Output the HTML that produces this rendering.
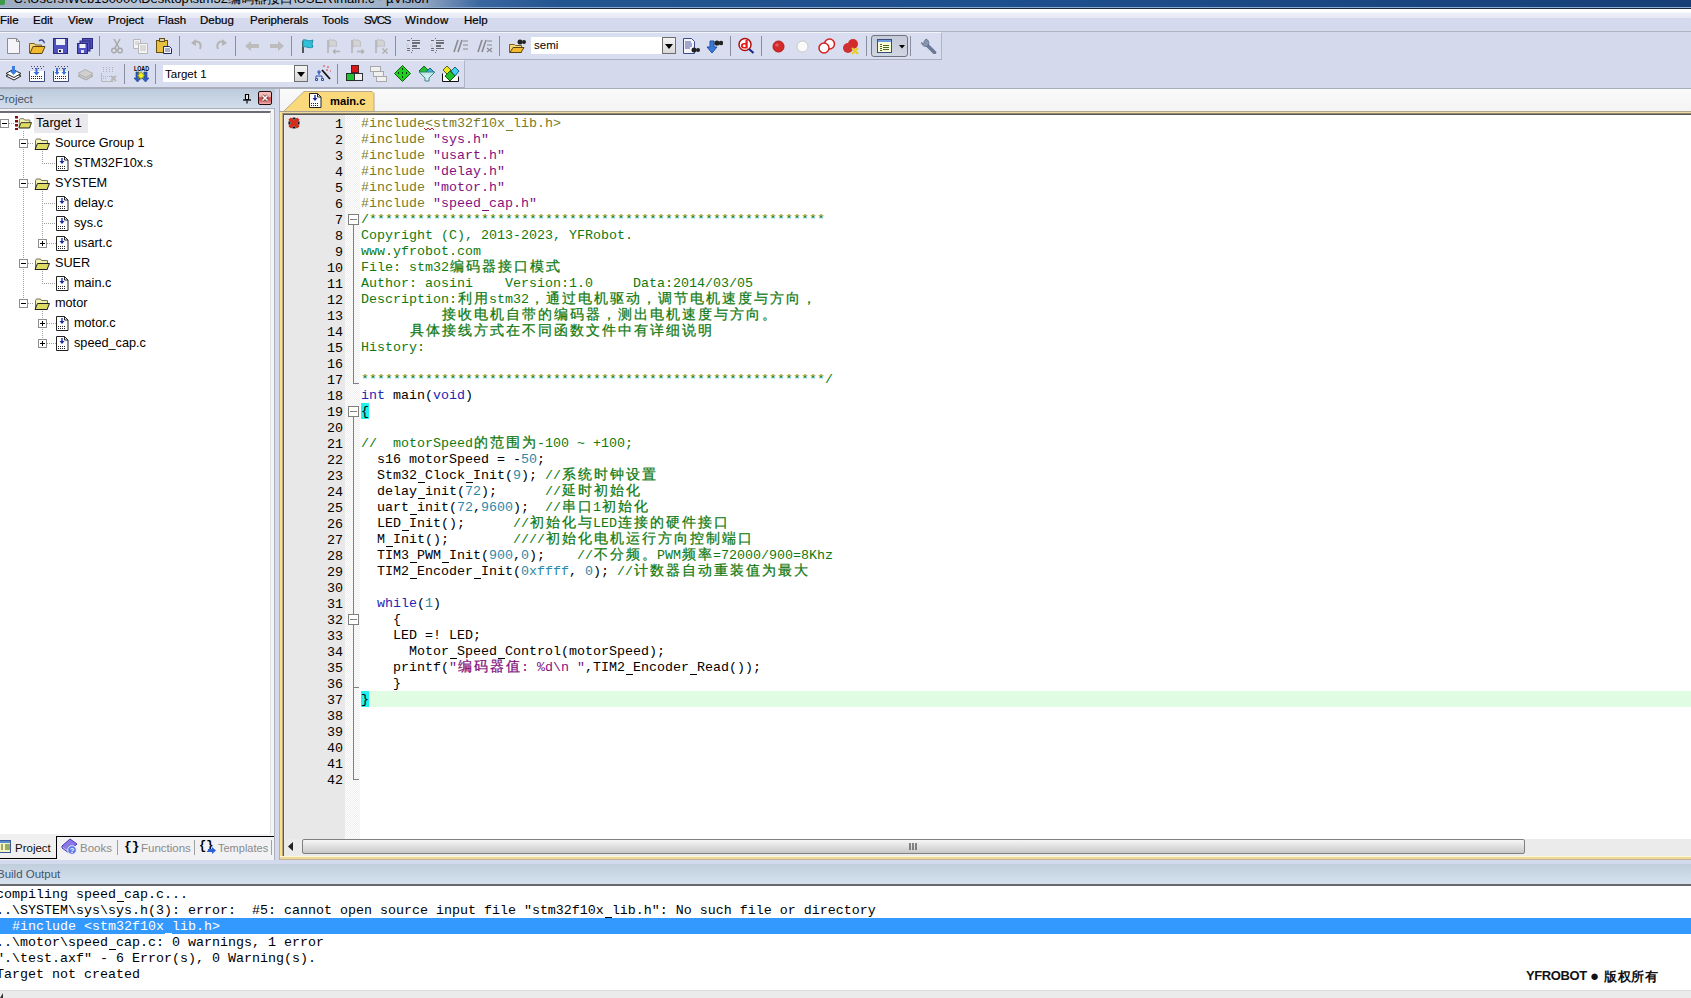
<!DOCTYPE html>
<html><head><meta charset="utf-8"><style>
*{margin:0;padding:0;box-sizing:border-box}
html,body{width:1691px;height:998px;overflow:hidden;position:relative;background:#D5DAEE;font-family:"Liberation Sans",sans-serif;font-size:12px;color:#000}
.a{position:absolute}
#title{left:0;top:0;width:1691px;height:9px;background:linear-gradient(90deg,#9AAAC0 0,#B8C4D4 120px,#B4C0D0 300px,#98AAC4 420px,#3A67A0 480px,#22548F 560px,#1E4F8D 1000px,#173F76 1691px);border-bottom:1px solid #1B2A3E;overflow:hidden}
#title span{position:absolute;left:13.5px;top:-10px;font-size:13px;color:#000;white-space:pre}
#menu{left:0;top:9px;width:1691px;height:23px;background:linear-gradient(#FFFFFF 0,#FFFFFF 3px,#EEF0F8 4px,#E7EAF5 8.5px,#D5DAEE 9.5px,#D4D9EE 21px,#D8DDEE 22px);border-bottom:1px solid #AEB4C4}
#menu span{position:absolute;top:5px;font-size:11.5px;color:#000;-webkit-text-stroke:0.2px #000}
#tb{left:0;top:32px;width:1691px;height:57px;background:#D4D9EC;border-bottom:1px solid #A8ADBA}
.tbline{position:absolute;left:0;width:1691px;height:1px;background:#B3B8C8}
.sep{position:absolute;width:1px;height:20px;background:#8A8E9C}
/* left panel */
#lp{left:0;top:108px;width:275px;height:752px;background:#F5F4F7;border-top:1px solid #A9B0BC;border-right:1px solid #A9B0BC}
#split{left:275px;top:89px;width:4px;height:771px;background:linear-gradient(90deg,#D0DCE8 0 1px,#D5D9EC 1px)}
#lphead{left:0;top:89px;width:275px;height:19px;background:linear-gradient(#BCCBDC,#D3DDEB)}
#lphead span{position:absolute;left:-3px;top:3.5px;font-size:11.5px;color:#44546A}
#tree{left:0;top:111px;width:271px;height:723px;background:#fff;border-top:2px solid #6A6D73;border-right:1px solid #E0E0E0}
.ti{position:absolute;font-size:12.7px;color:#000;white-space:pre}
#tabs{left:0;top:834px;width:274px;height:26px;background:#F2F2F4}
/* editor */
#ed{left:279px;top:89px;width:1412px;height:771px;background:#F7F7F7}
#gut{left:285px;top:115px;width:60px;height:724px;background:#E8E8E8}
#fold{left:345px;top:115px;width:15px;height:724px;background-color:#fff;background-image:repeating-conic-gradient(#EEEEEE 0 25%,#FFFFFF 0 50%);background-size:2px 2px}
#code{left:360px;top:115px;width:1331px;height:724px;background:#fff}
.ln{position:absolute;left:301px;width:42px;text-align:right;font-family:"Liberation Mono",monospace;font-size:13.333px;line-height:16px;height:16px;color:#000}
.cl{position:absolute;left:361px;font-family:"Liberation Mono",monospace;font-size:13.333px;line-height:16px;height:16px;white-space:pre;color:#000}
.cl i{font-style:normal;display:inline-block;width:16px;text-align:center;font-size:14px;line-height:16px;vertical-align:top;position:relative;top:-1.5px;-webkit-text-stroke:0.25px currentColor}
.pp{color:#7A7A28}.st{color:#82107E}.cm{color:#107A10}.kw{color:#2424B4}.nm{color:#2A88A8}
.br{}
/* output */
#ohead{left:0;top:860px;width:1691px;height:26px;background:linear-gradient(#D4DAEE 0,#D4DAEE 3.5px,#C1CFDD 4.5px,#D3E0EE 22px,#D8E0EC 23px,#D8E0EC 24px);border-bottom:2px solid #68696E}
#ohead span{position:absolute;left:-3px;top:8px;font-size:11.5px;color:#44546A}
#out{left:0;top:886px;width:1691px;height:104px;background:#fff}
.ol{position:absolute;left:-4px;height:16px;line-height:16px;font-family:"Liberation Mono",monospace;font-size:13.333px;white-space:pre;color:#000}
.ol.sel{color:#fff}
#status{left:0;top:990px;width:1691px;height:8px;background:#EBEBEB;border-top:1px solid #DCDCDC}
#wm{left:1526px;top:968px;font-size:13px;font-weight:bold;color:#111;white-space:pre}
.combo{background:#fff;border:0}
.combo span{position:absolute;font-size:11.5px;color:#000;white-space:pre}
.combo .dd{position:absolute;right:0;top:0;width:14px;height:17px;border:1px solid #6E6E6E;background:linear-gradient(#F4F4F4,#D8D8D8)}
.combo .dd:after{content:"";position:absolute;left:2px;top:6px;border-left:4px solid transparent;border-right:4px solid transparent;border-top:5px solid #000}
.tab{font-size:11.5px;color:#8A8A8A;white-space:pre}
#tabstrip{left:280px;top:89px;width:1411px;height:22px;background:linear-gradient(#FAFAFA,#F4F4F4)}
#frame{left:279px;top:111px;width:1412px;height:748px;background:#FBE18C;border-left:1px solid #BFB08A;border-top:1px solid #A8A090}
#frame2{left:282px;top:113px;width:1409px;height:744px;border-left:1px solid #B8A878;border-top:1px solid #8E8666}
#frame3{left:283px;top:114px;width:1408px;height:742px;border-left:1px solid #56595E;border-top:1px solid #55585C;background:#F1EFF5}
#hscroll{left:284px;top:839px;width:1407px;height:17px;background:#EBEBEB}
#thumb{left:302px;top:839px;width:1223px;height:15px;border:1px solid #808080;border-radius:2px;background:linear-gradient(#F6F6F6,#E0E0E0 50%,#C8C8C8)}
.dh{height:1px;background:repeating-linear-gradient(90deg,#A0A0A0 0 1px,transparent 1px 2px)}
.dv{width:1px;background:repeating-linear-gradient(#A0A0A0 0 1px,transparent 1px 2px)}

.us{display:inline-block;width:8px;height:16px;vertical-align:top;background:linear-gradient(transparent 14px,currentColor 14px,currentColor 15px,transparent 15px);background-size:7px 16px;background-repeat:no-repeat;background-position:1px 0}

</style></head><body>
<svg width="0" height="0" style="position:absolute">
<defs>
<symbol id="bm" viewBox="0 0 9 9"><rect x="0.5" y="0.5" width="8" height="8" fill="#fff" stroke="#8E8E8E"/><path d="M2 4.5h5" stroke="#000"/></symbol>
<symbol id="bp" viewBox="0 0 9 9"><rect x="0.5" y="0.5" width="8" height="8" fill="#fff" stroke="#8E8E8E"/><path d="M2 4.5h5M4.5 2v5" stroke="#000"/></symbol>
<symbol id="fd" viewBox="0 0 16 13"><path d="M1.5 2.5l1-1.5h4l1 1.5h6v9h-12z" fill="#F0F0B0" stroke="#6E6E50"/><path d="M1 11.5l2.5-6h12l-2.5 6z" fill="#DCDC60" stroke="#202020"/></symbol>
<symbol id="fl" viewBox="0 0 13 15"><path d="M0.5 0.5h8l3.5 3.5v10.5h-11.5z" fill="#fff" stroke="#222"/><path d="M8.5 0.5v3.5h3.5" fill="none" stroke="#222"/><path d="M6 2v5" stroke="#1A2A9A" stroke-width="1.4"/><path d="M3.5 5h5l-2.5 3z" fill="#1A2A9A"/><g fill="#222"><rect x="2" y="10" width="1" height="1"/><rect x="4" y="10" width="1" height="1"/><rect x="6" y="10" width="1" height="1"/><rect x="8" y="10" width="1" height="1"/><rect x="2" y="12" width="1" height="1"/><rect x="4" y="12" width="1" height="1"/><rect x="6" y="12" width="1" height="1"/><rect x="8" y="12" width="1" height="1"/></g></symbol>
<symbol id="gf" viewBox="0 0 16 16"><path d="M3 15V2" stroke="#B4B4B4" stroke-width="1.6"/><path d="M4 2c2-1 3 1 5 0l2 1 1 5c-2 1-3-1-5 0l-3 1z" fill="#D4D4D4" stroke="#B8B8B8" stroke-width=".8"/></symbol><symbol id="ga" viewBox="0 0 16 16"><use href="#gf"/><path d="M8 13.5h7M8 13.5l2.5-2M8 13.5l2.5 2" stroke="#B0B0B0" stroke-width="1.4" fill="none"/></symbol><symbol id="gb" viewBox="0 0 16 16"><use href="#gf"/><path d="M8 13.5h7M15 13.5l-2.5-2M15 13.5l-2.5 2" stroke="#B0B0B0" stroke-width="1.4" fill="none"/></symbol><symbol id="gc" viewBox="0 0 16 16"><use href="#gf"/><path d="M9.5 10.5l5 5M14.5 10.5l-5 5" stroke="#B0B0B0" stroke-width="1.4" fill="none"/></symbol>
</defs></svg>
<div class="a" id="title"><div class="a" style="left:0;top:7px;width:1691px;height:1px;background:linear-gradient(90deg,rgba(180,200,225,.5) 0,rgba(142,176,216,.9) 500px,#8EB0D8 1691px)"></div><div class="a" style="left:0;top:0;width:5px;height:5px;background:#3E9A4A;border-radius:0 0 2px 0"></div><span>C:\Users\Web150000\Desktop\stm32编码器接口\USER\main.c - µVision</span></div>
<div class="a" id="menu">
<span style="left:0px">File</span><span style="left:33px">Edit</span><span style="left:68px">View</span><span style="left:108px">Project</span><span style="left:158px">Flash</span><span style="left:200px">Debug</span><span style="left:250px">Peripherals</span><span style="left:322px">Tools</span><span style="left:364px;letter-spacing:-1.3px">SVCS</span><span style="left:405px;letter-spacing:0.5px">Window</span><span style="left:464px">Help</span>
</div>
<div class="a" id="tb">
<div class="a" style="left:0;top:0;width:942px;height:28px;background:#D8DDEF;border-top:1px solid #F2F4FB;border-bottom:1px solid #A9AEBD;border-right:1px solid #B0B5C4"></div>
<div class="a" style="left:0;top:28px;width:465px;height:28px;background:#D8DDEF;border-top:1px solid #F2F4FB;border-bottom:1px solid #A9AEBD;border-right:1px solid #B0B5C4"></div>
</div>
<!-- toolbar row 1 icons -->
<svg class="a" style="left:6px;top:38px" width="16" height="16"><path d="M1.5 0.5h9l3 3v12h-12z" fill="#F4F4FA" stroke="#8C8C8C"/><path d="M10.5 0.5v3h3" fill="none" stroke="#8C8C8C"/></svg>
<svg class="a" style="left:29px;top:38px" width="17" height="16"><path d="M10 3c2-2 4-1 5 1" fill="none" stroke="#3A4C9A" stroke-width="1.5"/><path d="M14 3l2 1-1 2z" fill="#3A4C9A"/><path d="M0.5 5.5h5l1 1.5h6v8h-12z" fill="#F6D77A" stroke="#7A6020"/><path d="M1 15.5l3-7h12l-3 7z" fill="#F2B830" stroke="#5A4410"/></svg>
<svg class="a" style="left:53px;top:38px" width="16" height="16"><rect x="0.5" y="0.5" width="14" height="15" fill="#5050C0" stroke="#2A2A80"/><rect x="3" y="1" width="9" height="6" fill="#EEF0FA"/><rect x="5" y="11" width="5" height="4" fill="#E8E8F0"/><rect x="6" y="12" width="2" height="2" fill="#202050"/></svg>
<svg class="a" style="left:77px;top:38px" width="16" height="16"><rect x="5.5" y="0.5" width="10" height="10" fill="#5050B8" stroke="#2A2A80"/><rect x="3" y="3" width="10" height="10" fill="#5050B8" stroke="#2A2A80"/><rect x="0.5" y="5.5" width="10" height="10" fill="#5050C0" stroke="#2A2A80"/><rect x="2.5" y="6" width="6" height="4" fill="#EEF0FA"/><rect x="4" y="12" width="3" height="3" fill="#E0E0F0"/></svg>
<div class="sep" style="left:99px;top:36px"></div>
<svg class="a" style="left:111px;top:38px" width="12" height="16"><path d="M3 1l5 9M9 1l-5 9" stroke="#A8A8A8" stroke-width="1.5"/><circle cx="3" cy="12.5" r="2.3" fill="none" stroke="#A8A8A8" stroke-width="1.4"/><circle cx="9" cy="12.5" r="2.3" fill="none" stroke="#A8A8A8" stroke-width="1.4"/></svg>
<svg class="a" style="left:133px;top:38px" width="16" height="16"><path d="M0.5 1.5h7v9h-7z" fill="#F4F4F4" stroke="#B8B8B8"/><path d="M5.5 5.5h9v10h-9z" fill="#F4F4F4" stroke="#B8B8B8"/><path d="M7 8h6M7 10h6M7 12h6M2 4h4M2 6h4" stroke="#C0C0C0"/></svg>
<svg class="a" style="left:156px;top:38px" width="17" height="16"><rect x="0.5" y="2.5" width="11" height="12" fill="#E8C040" stroke="#6A5010"/><rect x="3.5" y="0.5" width="5" height="3" fill="#D8D0B0" stroke="#6A5010"/><path d="M7.5 8.5h6l2 2v5h-8z" fill="#F4F4FA" stroke="#1A2A5A"/><path d="M9 11h5M9 13h5" stroke="#5A6A9A"/></svg>
<div class="sep" style="left:179px;top:36px"></div>
<svg class="a" style="left:190px;top:38px" width="14" height="16"><path d="M4 4c5-2 8 2 6 7" fill="none" stroke="#B4B4B4" stroke-width="2"/><path d="M1 5l5-4v7z" fill="#B4B4B4"/></svg>
<svg class="a" style="left:214px;top:38px" width="14" height="16"><path d="M10 4c-5-2-8 2-6 7" fill="none" stroke="#B4B4B4" stroke-width="2"/><path d="M13 5l-5-4v7z" fill="#B4B4B4"/></svg>
<div class="sep" style="left:235px;top:36px"></div>
<svg class="a" style="left:245px;top:40px" width="15" height="12"><path d="M0 6l6-5v3h8v4h-8v3z" fill="#BCBCBC"/></svg>
<svg class="a" style="left:269px;top:40px" width="15" height="12"><path d="M15 6l-6-5v3h-8v4h8v3z" fill="#BCBCBC"/></svg>
<div class="sep" style="left:291px;top:36px"></div>
<svg class="a" style="left:300px;top:38px" width="16" height="16"><path d="M3 15V3" stroke="#555" stroke-width="2"/><path d="M3 2c3-1 5 2 10 0l-1 4 1 3c-4 2-6-1-10 0z" fill="#30C0D8" stroke="#2090A8"/></svg>
<svg class="a" style="left:325px;top:38px" width="16" height="16"><use href="#ga"/></svg>
<svg class="a" style="left:349px;top:38px" width="16" height="16"><use href="#gb"/></svg>
<svg class="a" style="left:373px;top:38px" width="16" height="16"><use href="#gc"/></svg>
<div class="sep" style="left:395px;top:36px"></div>
<svg class="a" style="left:405px;top:37px" width="16" height="18"><g fill="#6E6E76"><rect x="2" y="3" width="3" height="1"/><rect x="7" y="3" width="8" height="1"/><rect x="7" y="5" width="8" height="2"/><rect x="7" y="8" width="5" height="2"/><rect x="2" y="11" width="3" height="1"/><rect x="7" y="11" width="8" height="1"/><rect x="2" y="13" width="3" height="1"/><rect x="7" y="13" width="1" height="1"/><rect x="6" y="1" width="1" height="1"/><rect x="6" y="15" width="1" height="1"/></g><path d="M1 7l3 1.5-3 1.5" fill="none" stroke="#C8C8D0"/></svg>
<svg class="a" style="left:429px;top:37px" width="16" height="18"><g fill="#6E6E76"><rect x="2" y="3" width="3" height="1"/><rect x="7" y="3" width="8" height="1"/><rect x="7" y="5" width="8" height="2"/><rect x="7" y="8" width="5" height="2"/><rect x="2" y="11" width="3" height="1"/><rect x="7" y="11" width="8" height="1"/><rect x="2" y="13" width="3" height="1"/><rect x="7" y="13" width="1" height="1"/><rect x="6" y="1" width="1" height="1"/><rect x="6" y="15" width="1" height="1"/></g><path d="M4 7l-3 1.5 3 1.5" fill="none" stroke="#C8C8D0"/></svg>
<svg class="a" style="left:453px;top:38px" width="16" height="16"><path d="M1 14l4-12M5 14l4-12" stroke="#8A8A90" stroke-width="1.6"/><path d="M10 3h5M10 7h5M10 11h5" stroke="#8A8A90" stroke-width="1.2"/></svg>
<svg class="a" style="left:477px;top:38px" width="16" height="16"><path d="M1 14l4-12M5 14l4-12" stroke="#8A8A90" stroke-width="1.6"/><path d="M10 3h5M10 7h5M10 14l5-4M10 10l5 4" stroke="#8A8A90" stroke-width="1.2"/></svg>
<div class="sep" style="left:499px;top:36px"></div>
<svg class="a" style="left:509px;top:38px" width="17" height="16"><path d="M0.5 6.5h5l1 1h6v7h-12z" fill="#F6D77A" stroke="#7A6020"/><path d="M1 14.5l3-5h11l-3 5z" fill="#F2B830" stroke="#5A4410"/><circle cx="11" cy="4" r="2.5" fill="#222"/><circle cx="15" cy="4" r="2" fill="#222"/></svg>
<div class="a combo" style="left:531px;top:37px;width:145px;height:17px"><span style="left:3px;top:2px">semi</span><div class="dd"></div></div>
<svg class="a" style="left:683px;top:38px" width="17" height="16"><path d="M0.5 0.5h8l3 3v12h-11z" fill="#F4F4FA" stroke="#3A4A8A"/><path d="M2 4h6M2 6h7M2 8h7M2 10h5" stroke="#4A5AA0"/><circle cx="11" cy="12" r="2.5" fill="#222"/><circle cx="15" cy="12" r="2" fill="#222"/></svg>
<svg class="a" style="left:706px;top:38px" width="17" height="16"><path d="M4 3v6H1l5 6 5-6H8V3z" fill="#3A7AD8" stroke="#2050A0"/><circle cx="11" cy="5" r="2.6" fill="#222"/><circle cx="15" cy="5" r="2.2" fill="#222"/></svg>
<div class="sep" style="left:730px;top:36px"></div>
<svg class="a" style="left:738px;top:37px" width="17" height="17"><circle cx="7" cy="7.5" r="6" fill="#fff" stroke="#B01010" stroke-width="1.5"/><path d="M7.5 3h2.2v8.5h-4a2.7 2.7 0 0 1 0-5.4h1.8zM7.5 7.6h-1.4a1.2 1.2 0 0 0 0 2.4h1.4z" fill="#E81818" fill-rule="evenodd"/><path d="M11 12l4.5 4" stroke="#1A2A8A" stroke-width="2.2"/></svg>
<div class="sep" style="left:761px;top:36px"></div>
<svg class="a" style="left:772px;top:40px" width="13" height="13"><circle cx="6.5" cy="6.5" r="5.5" fill="#D42A2A" stroke="#B01818"/><circle cx="5" cy="5" r="1.8" fill="#F08080" opacity=".6"/></svg>
<svg class="a" style="left:796px;top:40px" width="13" height="13"><circle cx="6.5" cy="6.5" r="5.5" fill="#FAFAFA" stroke="#C8C8C8"/></svg>
<svg class="a" style="left:817px;top:38px" width="20" height="16"><circle cx="12.5" cy="6" r="5" fill="#fff" stroke="#D42020" stroke-width="1.5"/><circle cx="7" cy="10" r="5" fill="#fff" stroke="#D42020" stroke-width="1.5"/></svg>
<svg class="a" style="left:842px;top:38px" width="19" height="17"><circle cx="11" cy="6" r="5" fill="#D42A2A"/><circle cx="6" cy="10" r="5" fill="#D03030"/><path d="M10 10l6 6M16 10l-6 6" stroke="#E8D020" stroke-width="2"/></svg>
<div class="sep" style="left:866px;top:36px"></div>
<div class="a" style="left:871px;top:35px;width:37px;height:22px;border:1px solid #70747E;border-radius:3px;background:linear-gradient(#C4CAD8,#D0D5E2)"></div>
<svg class="a" style="left:877px;top:38px" width="30" height="16"><rect x="0.5" y="1.5" width="14" height="13" fill="#FAFAD8" stroke="#3A4A7A"/><rect x="1" y="2" width="13" height="2" fill="#6A9AE0"/><path d="M3 6h2v1H3zM3 8h2v1H3zM3 10h2v1H3zM3 12h2v1H3zM6 7h6v1H6zM6 9h6v1H6zM6 11h6v1H6z" fill="#4A6A20"/><path d="M22 7h6l-3 3.5z" fill="#000"/></svg>
<div class="sep" style="left:910px;top:36px"></div>
<svg class="a" style="left:920px;top:38px" width="17" height="16"><path d="M6.5 6.5l8 8" stroke="#6A7898" stroke-width="3.6" stroke-linecap="round"/><path d="M1.5 4.5a4.2 4.2 0 0 0 6 3.5l0.5-0.5a4.2 4.2 0 0 0-2-6.5l-2 2.5 0.5 1.5-1.5 0.5z" fill="#8A96B0" stroke="#5A6888" stroke-width=".8"/></svg>
<!-- toolbar row 2 icons -->
<svg class="a" style="left:5px;top:66px" width="17" height="16"><path d="M1 10l7-4 8 4-7 4z" fill="#fff" stroke="#222"/><path d="M1 7.5l7-4 8 4-7 4z" fill="#fff" stroke="#222"/><path d="M7 0v5H4.5l4 4 4-4H10V0z" fill="#3A80E0"/></svg>
<svg class="a" style="left:29px;top:66px" width="16" height="16"><path d="M2 0h1v1h-1zM5 0h1v1h-1zM8 0h1v1h-1zM11 0h1v1h-1zM14 0h1v1h-1zM3 2h1v1h-1zM6 2h1v1h-1zM9 2h1v1h-1zM12 2h1v1h-1z" fill="#4A4A60"/><path d="M0.5 5v10.5h15V5" fill="#fff" stroke="#3A4A7A"/><path d="M2 10h1v1h-1zM4 10h1v1h-1zM6 10h1v1h-1zM8 10h1v1h-1zM10 10h1v1h-1zM12 10h1v1h-1zM2 12h1v1h-1zM4 12h1v1h-1zM6 12h1v1h-1zM8 12h1v1h-1zM10 12h1v1h-1zM12 12h1v1h-1z" fill="#222"/><path d="M6.5 2v4H4.5l3 3.5 3-3.5H8.5V2z" fill="#3A70D8"/></svg>
<svg class="a" style="left:53px;top:66px" width="16" height="16"><path d="M2 0h1v1h-1zM5 0h1v1h-1zM8 0h1v1h-1zM11 0h1v1h-1zM14 0h1v1h-1zM3 2h1v1h-1zM6 2h1v1h-1zM9 2h1v1h-1zM12 2h1v1h-1z" fill="#4A4A60"/><path d="M0.5 5v10.5h15V5" fill="#fff" stroke="#3A4A7A"/><path d="M2 10h1v1h-1zM4 10h1v1h-1zM6 10h1v1h-1zM8 10h1v1h-1zM10 10h1v1h-1zM12 10h1v1h-1zM2 12h1v1h-1zM4 12h1v1h-1zM6 12h1v1h-1zM8 12h1v1h-1zM10 12h1v1h-1zM12 12h1v1h-1z" fill="#222"/><path d="M3 2v4H1.5l2.5 3 2.5-3H5V2zM10 2v4H8.5l2.5 3 2.5-3H12V2z" fill="#3A70D8"/></svg>
<svg class="a" style="left:77px;top:66px" width="16" height="16"><path d="M1 10l7-4 8 4-7 4z" fill="#C8C8C8" stroke="#A8A8A8"/><path d="M1 7.5l7-4 8 4-7 4z" fill="#D0D0D0" stroke="#B0B0B0"/></svg>
<svg class="a" style="left:101px;top:66px" width="16" height="16"><path d="M2 1h1v1h-1zM5 1h1v1h-1zM8 1h1v1h-1zM11 1h1v1h-1zM2 3h1v1h-1zM5 3h1v1h-1zM8 3h1v1h-1zM11 3h1v1h-1zM2 5h1v1h-1zM5 5h1v1h-1zM8 5h1v1h-1zM11 5h1v1h-1z" fill="#B0B0B0"/><path d="M0.5 7v8.5h12" fill="none" stroke="#B8B8B8"/><path d="M2 10h1v1h-1zM4 10h1v1h-1zM6 10h1v1h-1zM8 10h1v1h-1zM10 10h1v1h-1zM12 10h1v1h-1zM2 12h1v1h-1zM4 12h1v1h-1z" fill="#B8B8B8"/><path d="M10 10l5 5M15 10l-5 5" stroke="#B8B8B8" stroke-width="1.8"/></svg>
<div class="sep" style="left:124px;top:64px"></div>
<svg class="a" style="left:132px;top:64px" width="18" height="19"><text x="2" y="7" font-size="7" font-weight="bold" textLength="15" lengthAdjust="spacingAndGlyphs" font-family="Liberation Sans" fill="#000">LOAD</text><path d="M4 8h3v6h2l-3.5 4-3.5-4h2zM12 8h3v6h2l-3.5 4-3.5-4h2z" fill="#2A5CC8" stroke="#1A3A80" stroke-width=".6"/><path d="M9 7.5l1 2 2-1-1 2 2 1-2 1 1 2-2-1-1 2-1-2-2 1 1-2-2-1 2-1-1-2 2 1z" fill="#EEF020" stroke="#6A7010" stroke-width=".5"/></svg>
<div class="sep" style="left:155px;top:64px"></div>
<div class="a combo" style="left:163px;top:65px;width:145px;height:17px"><span style="left:2px;top:3px">Target 1</span><div class="dd"></div></div>
<svg class="a" style="left:314px;top:65px" width="18" height="17"><path d="M8 5l8 9" stroke="#111" stroke-width="1.8"/><path d="M9 1h2M13 2h2M12 5h2M16 6h1" stroke="#D04040"/><path d="M5 7v3M2 13v-2h6v2M1.5 13.5h2v2h-2zM7.5 13.5h2v2h-2zM4 6h2v2H4z" fill="none" stroke="#2A50B0"/></svg>
<div class="sep" style="left:337px;top:64px"></div>
<svg class="a" style="left:346px;top:65px" width="18" height="17"><rect x="5.5" y="0.5" width="7" height="7" fill="#D81818" stroke="#502020"/><rect x="0.5" y="8.5" width="8" height="7" fill="#20C030" stroke="#203020"/><rect x="8.5" y="8.5" width="8" height="7" fill="#F0F0F0" stroke="#303030"/></svg>
<svg class="a" style="left:370px;top:66px" width="17" height="16"><rect x="0.5" y="0.5" width="10" height="5" fill="#F0F0F0" stroke="#A8A8A8"/><rect x="3.5" y="5.5" width="10" height="5" fill="#F0F0F0" stroke="#A8A8A8"/><rect x="6.5" y="10.5" width="10" height="5" fill="#F0F0F0" stroke="#A8A8A8"/></svg>
<svg class="a" style="left:394px;top:65px" width="17" height="17"><path d="M8.5 0.5l8 8-8 8-8-8z" fill="#20D020" stroke="#106010"/><path d="M8 4h1M4 8h1M12 8h1M8 12h1M8 8h1" stroke="#000" stroke-width="1.5"/></svg>
<svg class="a" style="left:418px;top:65px" width="18" height="17"><path d="M6 1l5 5-5 4-5-4z" fill="#20C030" stroke="#206020"/><path d="M12 3l4 4-4 3-4-3z" fill="#40B0E0" stroke="#206080"/><path d="M1 7h16l-6 6v3h-4v-3z" fill="#D0F0F0" stroke="#308080" opacity=".9"/></svg>
<svg class="a" style="left:442px;top:65px" width="18" height="17"><path d="M0.5 8.5v8h16v-5" fill="#fff" stroke="#111"/><path d="M5 1l4 4-4 4-4-4z" fill="#E8E820" stroke="#606020"/><path d="M13 2l4 4-4 5-4-5z" fill="#40D0F0" stroke="#206080"/><path d="M8 6l5 5-5 5-5-5z" fill="#20C030" stroke="#106010"/></svg>
<!-- left panel -->
<div class="a" id="lp"></div><div class="a" id="split"></div>
<div class="a" id="lphead"><span>Project</span></div>
<svg class="a" style="left:242px;top:93px" width="10" height="11"><path d="M3.5 1.5h3v5h-3z" fill="#fff" stroke="#000" stroke-width="1.2"/><path d="M1 7h8" stroke="#000" stroke-width="1.3"/><path d="M5 7.5v3" stroke="#000" stroke-width="1.2"/></svg>
<div class="a" style="left:258px;top:91px;width:14px;height:14px;border:1px solid #2A0A0A;border-radius:2px;background:linear-gradient(#F6C4C4 0,#EFA8A8 40%,#C84848 48%,#D66A6A 75%,#F2B4B4 100%)"></div>
<svg class="a" style="left:261px;top:94px" width="8" height="8"><path d="M1.5 1.5l5 5M6.5 1.5l-5 5" stroke="#5A2020" stroke-width="2.8"/><path d="M1.5 1.5l5 5M6.5 1.5l-5 5" stroke="#fff" stroke-width="1.7"/></svg>
<div class="a" id="tree"></div>
<div class="a" style="left:34px;top:114px;width:54px;height:19px;background:#E9E9EE"></div>
<div class="a dh" style="left:9px;top:123px;width:6px"></div>
<svg class="a" style="left:15px;top:116px" width="17" height="14"><path d="M1.5 0v14" stroke="#8A0A0A" stroke-width="3" stroke-dasharray="2.5 1.5"/><use href="#fd" x="3" y="1" width="14" height="13"/></svg>
<span class="a ti" style="left:36px;top:116px">Target 1</span>
<div class="a dh" style="left:28px;top:143px;width:6px"></div>
<svg class="a" style="left:34px;top:138px" width="16" height="13"><use href="#fd"/></svg>
<span class="a ti" style="left:55px;top:136px">Source Group 1</span>
<div class="a dh" style="left:42px;top:163px;width:14px"></div>
<svg class="a" style="left:56px;top:156px" width="13" height="15"><use href="#fl"/></svg>
<span class="a ti" style="left:74px;top:156px">STM32F10x.s</span>
<div class="a dh" style="left:28px;top:183px;width:6px"></div>
<svg class="a" style="left:34px;top:178px" width="16" height="13"><use href="#fd"/></svg>
<span class="a ti" style="left:55px;top:176px">SYSTEM</span>
<div class="a dh" style="left:42px;top:203px;width:14px"></div>
<svg class="a" style="left:56px;top:196px" width="13" height="15"><use href="#fl"/></svg>
<span class="a ti" style="left:74px;top:196px">delay.c</span>
<div class="a dh" style="left:42px;top:223px;width:14px"></div>
<svg class="a" style="left:56px;top:216px" width="13" height="15"><use href="#fl"/></svg>
<span class="a ti" style="left:74px;top:216px">sys.c</span>
<div class="a dh" style="left:47px;top:243px;width:9px"></div>
<svg class="a" style="left:56px;top:236px" width="13" height="15"><use href="#fl"/></svg>
<span class="a ti" style="left:74px;top:236px">usart.c</span>
<div class="a dh" style="left:28px;top:263px;width:6px"></div>
<svg class="a" style="left:34px;top:258px" width="16" height="13"><use href="#fd"/></svg>
<span class="a ti" style="left:55px;top:256px">SUER</span>
<div class="a dh" style="left:42px;top:283px;width:14px"></div>
<svg class="a" style="left:56px;top:276px" width="13" height="15"><use href="#fl"/></svg>
<span class="a ti" style="left:74px;top:276px">main.c</span>
<div class="a dh" style="left:28px;top:303px;width:6px"></div>
<svg class="a" style="left:34px;top:298px" width="16" height="13"><use href="#fd"/></svg>
<span class="a ti" style="left:55px;top:296px">motor</span>
<div class="a dh" style="left:47px;top:323px;width:9px"></div>
<svg class="a" style="left:56px;top:316px" width="13" height="15"><use href="#fl"/></svg>
<span class="a ti" style="left:74px;top:316px">motor.c</span>
<div class="a dh" style="left:47px;top:343px;width:9px"></div>
<svg class="a" style="left:56px;top:336px" width="13" height="15"><use href="#fl"/></svg>
<span class="a ti" style="left:74px;top:336px">speed_cap.c</span>
<div class="a dv" style="left:23px;top:131px;height:172px"></div>
<div class="a dv" style="left:42px;top:151px;height:12px"></div>
<div class="a dv" style="left:42px;top:191px;height:52px"></div>
<div class="a dv" style="left:42px;top:271px;height:12px"></div>
<div class="a dv" style="left:42px;top:311px;height:32px"></div>
<svg class="a" style="left:0px;top:119px" width="9" height="9"><use href="#bm"/></svg>
<svg class="a" style="left:19px;top:139px" width="9" height="9"><use href="#bm"/></svg>
<svg class="a" style="left:19px;top:179px" width="9" height="9"><use href="#bm"/></svg>
<svg class="a" style="left:38px;top:239px" width="9" height="9"><use href="#bp"/></svg>
<svg class="a" style="left:19px;top:259px" width="9" height="9"><use href="#bm"/></svg>
<svg class="a" style="left:19px;top:299px" width="9" height="9"><use href="#bm"/></svg>
<svg class="a" style="left:38px;top:319px" width="9" height="9"><use href="#bp"/></svg>
<svg class="a" style="left:38px;top:339px" width="9" height="9"><use href="#bp"/></svg>
<div class="a" id="tabs"></div>
<div class="a" style="left:57px;top:836px;width:217px;height:1px;background:#000"></div>
<div class="a" style="left:0;top:858px;width:57px;height:1px;background:#000"></div>
<div class="a" style="left:56px;top:836px;width:1px;height:23px;background:#000"></div>
<div class="a" style="left:0;top:834px;width:56px;height:24px;background:#F0F0F0"></div>
<svg class="a" style="left:0;top:840px" width="12" height="14"><rect x="-3.5" y="0.5" width="14" height="12" fill="#F4F4C0" stroke="#3A5A9A"/><rect x="-3" y="1" width="13" height="2" fill="#5A8AD0"/><path d="M1 5h2M1 7h2M1 9h2M5 5h5M5 7h5M5 9h5" stroke="#406010"/></svg>
<span class="a tab" style="left:15px;top:842px;color:#111">Project</span>
<svg class="a" style="left:61px;top:838px" width="17" height="17"><path d="M1 8l8-7 7 5-8 7z" fill="#8A78E8" stroke="#4A38B0"/><path d="M1 8v2l7 5 1-2" fill="#B8A8F0" stroke="#4A38B0"/><circle cx="11" cy="12" r="4.3" fill="#5A78E0" stroke="#E8ECFF"/><text x="11" y="15" font-size="7.5" font-weight="bold" text-anchor="middle" fill="#fff" font-family="Liberation Sans">?</text></svg>
<span class="a tab" style="left:80px;top:842px">Books</span>
<div class="a" style="left:117px;top:840px;width:1px;height:15px;background:#A0A0A0"></div>
<span class="a" style="left:124px;top:839px;font-size:13px;font-weight:bold;color:#000;font-family:'Liberation Mono'">{}</span>
<span class="a tab" style="left:141px;top:842px">Functions</span>
<div class="a" style="left:194px;top:840px;width:1px;height:15px;background:#A0A0A0"></div>
<span class="a" style="left:199px;top:839px;font-size:12px;font-weight:bold;color:#000;font-family:'Liberation Mono'">{}</span>
<svg class="a" style="left:208px;top:847px" width="8" height="7"><path d="M0 2h4V0l4 3.5-4 3.5V5H0z" fill="#2A60D0"/></svg>
<span class="a tab" style="left:218px;top:842px;font-size:11px">Templates</span>
<div class="a" style="left:271px;top:840px;width:1px;height:15px;background:#A0A0A0"></div>
<!-- editor -->
<div class="a" id="ed"></div>
<div class="a" id="tabstrip"></div><div class="a" style="left:279px;top:89px;width:1px;height:22px;background:#A9B0BC"></div>
<svg class="a" style="left:279px;top:90px" width="97" height="23"><path d="M4 22L25 1.5h68l2 2V22z" fill="#FAD87C" stroke="#B9A98A"/></svg>
<svg class="a" style="left:309px;top:93px" width="13" height="15"><use href="#fl"/></svg>
<span class="a" style="left:330px;top:95px;font-size:11.2px;font-weight:bold;color:#000">main.c</span>
<div class="a" id="frame"></div><div class="a" style="left:375px;top:111px;width:1316px;height:1px;background:#B0A890"></div><div class="a" style="left:282px;top:112px;width:1409px;height:1px;background:#EEDCA8"></div><div class="a" id="frame2"></div><div class="a" id="frame3"></div>
<div class="a" id="gut"></div>
<div class="a" id="fold"></div>
<div class="a" id="code"></div>
<div class="a" style="left:361px;top:691px;width:1330px;height:16px;background:#E0FCE2"></div><div class="a" style="left:361px;top:691px;width:8px;height:16px;background:#20F0F0"></div><div class="a" style="left:361px;top:403px;width:8px;height:16px;background:#20F0F0"></div>
<svg class="a" style="left:348px;top:214px" width="11" height="11"><rect x="0.5" y="0.5" width="10" height="10" fill="#fff" stroke="#808080"/><path d="M2 5.5h7" stroke="#808080"/></svg>
<div class="a" style="left:353px;top:225px;width:1px;height:158px;background:#808080"></div>
<div class="a" style="left:353px;top:383px;width:6px;height:1px;background:#808080"></div>
<svg class="a" style="left:348px;top:406px" width="11" height="11"><rect x="0.5" y="0.5" width="10" height="10" fill="#fff" stroke="#808080"/><path d="M2 5.5h7" stroke="#808080"/></svg>
<div class="a" style="left:353px;top:417px;width:1px;height:363px;background:#808080"></div>
<div class="a" style="left:353px;top:779px;width:6px;height:1px;background:#808080"></div>
<svg class="a" style="left:348px;top:614px" width="11" height="11"><rect x="0.5" y="0.5" width="10" height="10" fill="#fff" stroke="#808080"/><path d="M2 5.5h7" stroke="#808080"/></svg>
<div class="a" style="left:353px;top:687px;width:6px;height:1px;background:#808080"></div>
<svg class="a" style="left:287px;top:116px" width="14" height="14"><circle cx="7" cy="7" r="5.6" fill="#111"/><path d="M2.6 2.6l8.8 8.8M11.4 2.6l-8.8 8.8" stroke="#fff" stroke-width="4.6" opacity=".5"/><path d="M2.6 2.6l8.8 8.8M11.4 2.6l-8.8 8.8" stroke="#D82818" stroke-width="3.4"/></svg>
<div class="ln" style="top:117px">1</div>
<div class="cl" style="top:116px"><span class="pp">#include&lt;stm32f10x<b class="us"></b>lib.h&gt;</span></div>
<div class="ln" style="top:133px">2</div>
<div class="cl" style="top:132px"><span class="pp">#include </span><span class="st">"sys.h"</span></div>
<div class="ln" style="top:149px">3</div>
<div class="cl" style="top:148px"><span class="pp">#include </span><span class="st">"usart.h"</span></div>
<div class="ln" style="top:165px">4</div>
<div class="cl" style="top:164px"><span class="pp">#include </span><span class="st">"delay.h"</span></div>
<div class="ln" style="top:181px">5</div>
<div class="cl" style="top:180px"><span class="pp">#include </span><span class="st">"motor.h"</span></div>
<div class="ln" style="top:197px">6</div>
<div class="cl" style="top:196px"><span class="pp">#include </span><span class="st">"speed<b class="us"></b>cap.h"</span></div>
<div class="ln" style="top:213px">7</div>
<div class="cl" style="top:212px"><span class="cm">/*********************************************************</span></div>
<div class="ln" style="top:229px">8</div>
<div class="cl" style="top:228px"><span class="cm">Copyright (C), 2013-2023, YFRobot.</span></div>
<div class="ln" style="top:245px">9</div>
<div class="cl" style="top:244px"><span class="cm">www.yfrobot.com</span></div>
<div class="ln" style="top:261px">10</div>
<div class="cl" style="top:260px"><span class="cm">File: stm32<i>编</i><i>码</i><i>器</i><i>接</i><i>口</i><i>模</i><i>式</i></span></div>
<div class="ln" style="top:277px">11</div>
<div class="cl" style="top:276px"><span class="cm">Author: aosini    Version:1.0     Data:2014/03/05</span></div>
<div class="ln" style="top:293px">12</div>
<div class="cl" style="top:292px"><span class="cm">Description:<i>利</i><i>用</i>stm32<i>，</i><i>通</i><i>过</i><i>电</i><i>机</i><i>驱</i><i>动</i><i>，</i><i>调</i><i>节</i><i>电</i><i>机</i><i>速</i><i>度</i><i>与</i><i>方</i><i>向</i><i>，</i></span></div>
<div class="ln" style="top:309px">13</div>
<div class="cl" style="top:308px"><span class="cm">          <i>接</i><i>收</i><i>电</i><i>机</i><i>自</i><i>带</i><i>的</i><i>编</i><i>码</i><i>器</i><i>，</i><i>测</i><i>出</i><i>电</i><i>机</i><i>速</i><i>度</i><i>与</i><i>方</i><i>向</i><i>。</i></span></div>
<div class="ln" style="top:325px">14</div>
<div class="cl" style="top:324px"><span class="cm">      <i>具</i><i>体</i><i>接</i><i>线</i><i>方</i><i>式</i><i>在</i><i>不</i><i>同</i><i>函</i><i>数</i><i>文</i><i>件</i><i>中</i><i>有</i><i>详</i><i>细</i><i>说</i><i>明</i></span></div>
<div class="ln" style="top:341px">15</div>
<div class="cl" style="top:340px"><span class="cm">History:</span></div>
<div class="ln" style="top:357px">16</div>
<div class="ln" style="top:373px">17</div>
<div class="cl" style="top:372px"><span class="cm">**********************************************************/</span></div>
<div class="ln" style="top:389px">18</div>
<div class="cl" style="top:388px"><span class="kw">int</span> main(<span class="kw">void</span>)</div>
<div class="ln" style="top:405px">19</div>
<div class="cl" style="top:404px"><span class="br">{</span></div>
<div class="ln" style="top:421px">20</div>
<div class="ln" style="top:437px">21</div>
<div class="cl" style="top:436px"><span class="cm">//  motorSpeed<i>的</i><i>范</i><i>围</i><i>为</i>-100 ~ +100;</span></div>
<div class="ln" style="top:453px">22</div>
<div class="cl" style="top:452px">  s16 motorSpeed = -<span class="nm">50</span>;</div>
<div class="ln" style="top:469px">23</div>
<div class="cl" style="top:468px">  Stm32<b class="us"></b>Clock<b class="us"></b>Init(<span class="nm">9</span>); <span class="cm">//<i>系</i><i>统</i><i>时</i><i>钟</i><i>设</i><i>置</i></span></div>
<div class="ln" style="top:485px">24</div>
<div class="cl" style="top:484px">  delay<b class="us"></b>init(<span class="nm">72</span>);      <span class="cm">//<i>延</i><i>时</i><i>初</i><i>始</i><i>化</i></span></div>
<div class="ln" style="top:501px">25</div>
<div class="cl" style="top:500px">  uart<b class="us"></b>init(<span class="nm">72</span>,<span class="nm">9600</span>);  <span class="cm">//<i>串</i><i>口</i>1<i>初</i><i>始</i><i>化</i></span></div>
<div class="ln" style="top:517px">26</div>
<div class="cl" style="top:516px">  LED<b class="us"></b>Init();      <span class="cm">//<i>初</i><i>始</i><i>化</i><i>与</i>LED<i>连</i><i>接</i><i>的</i><i>硬</i><i>件</i><i>接</i><i>口</i></span></div>
<div class="ln" style="top:533px">27</div>
<div class="cl" style="top:532px">  M<b class="us"></b>Init();        <span class="cm">////<i>初</i><i>始</i><i>化</i><i>电</i><i>机</i><i>运</i><i>行</i><i>方</i><i>向</i><i>控</i><i>制</i><i>端</i><i>口</i></span></div>
<div class="ln" style="top:549px">28</div>
<div class="cl" style="top:548px">  TIM3<b class="us"></b>PWM<b class="us"></b>Init(<span class="nm">900</span>,<span class="nm">0</span>);    <span class="cm">//<i>不</i><i>分</i><i>频</i><i>。</i>PWM<i>频</i><i>率</i>=72000/900=8Khz</span></div>
<div class="ln" style="top:565px">29</div>
<div class="cl" style="top:564px">  TIM2<b class="us"></b>Encoder<b class="us"></b>Init(<span class="nm">0xffff</span>, <span class="nm">0</span>); <span class="cm">//<i>计</i><i>数</i><i>器</i><i>自</i><i>动</i><i>重</i><i>装</i><i>值</i><i>为</i><i>最</i><i>大</i></span></div>
<div class="ln" style="top:581px">30</div>
<div class="ln" style="top:597px">31</div>
<div class="cl" style="top:596px">  <span class="kw">while</span>(<span class="nm">1</span>)</div>
<div class="ln" style="top:613px">32</div>
<div class="cl" style="top:612px">    {</div>
<div class="ln" style="top:629px">33</div>
<div class="cl" style="top:628px">    LED =! LED;</div>
<div class="ln" style="top:645px">34</div>
<div class="cl" style="top:644px">      Motor<b class="us"></b>Speed<b class="us"></b>Control(motorSpeed);</div>
<div class="ln" style="top:661px">35</div>
<div class="cl" style="top:660px">    printf(<span class="st">"<i>编</i><i>码</i><i>器</i><i>值</i>: %d\n "</span>,TIM2<b class="us"></b>Encoder<b class="us"></b>Read());</div>
<div class="ln" style="top:677px">36</div>
<div class="cl" style="top:676px">    }</div>
<div class="ln" style="top:693px">37</div>
<div class="cl" style="top:692px"><span class="br">}</span></div>
<div class="ln" style="top:709px">38</div>
<div class="ln" style="top:725px">39</div>
<div class="ln" style="top:741px">40</div>
<div class="ln" style="top:757px">41</div>
<div class="ln" style="top:773px">42</div>
<svg class="a" style="left:424px;top:127px" width="10" height="4"><path d="M0 1l2 2 2-2 2 2 2-2 2 2" fill="none" stroke="#D02020"/></svg>
<div class="a" id="hscroll"></div>
<svg class="a" style="left:288px;top:842px" width="6" height="9"><path d="M5 0v9L0 4.5z" fill="#222"/></svg>
<div class="a" id="thumb"></div>
<svg class="a" style="left:909px;top:843px" width="8" height="7"><path d="M1 0v7M4 0v7M7 0v7" stroke="#222"/></svg>
<div class="a" style="left:280px;top:856px;width:1411px;height:1px;background:#FFF6D2"></div><div class="a" style="left:280px;top:857px;width:1411px;height:2px;background:#EDD89E"></div><div class="a" style="left:279px;top:859px;width:1412px;height:1px;background:#C2B38E"></div>
<div class="a" id="ohead"><span>Build Output</span></div>
<div class="a" id="out"></div>
<div class="a" style="left:0;top:918px;width:1691px;height:16px;background:#3399FF"></div>
<div class="ol" style="top:887px">compiling speed<b class="us"></b>cap.c...</div>
<div class="ol" style="top:903px">..\SYSTEM\sys\sys.h(3): error:  #5: cannot open source input file "stm32f10x<b class="us"></b>lib.h": No such file or directory</div>
<div class="ol sel" style="top:919px">  #include &lt;stm32f10x<b class="us"></b>lib.h&gt;</div>
<div class="ol" style="top:935px">..\motor\speed<b class="us"></b>cap.c: 0 warnings, 1 error</div>
<div class="ol" style="top:951px">".\test.axf" - 6 Error(s), 0 Warning(s).</div>
<div class="ol" style="top:967px">Target not created</div>
<div class="a" id="status"></div><svg class="a" style="left:0;top:993px" width="4" height="5"><path d="M3 0v5H0z" fill="#333"/></svg>
<div class="a" id="wm"><span style="letter-spacing:-0.4px">YFROBOT</span><span style="position:absolute;left:64px;top:-1px;font-size:15px">●</span><span style="position:absolute;left:78px;top:0;letter-spacing:0.6px">版权所有</span></div>

</body></html>
